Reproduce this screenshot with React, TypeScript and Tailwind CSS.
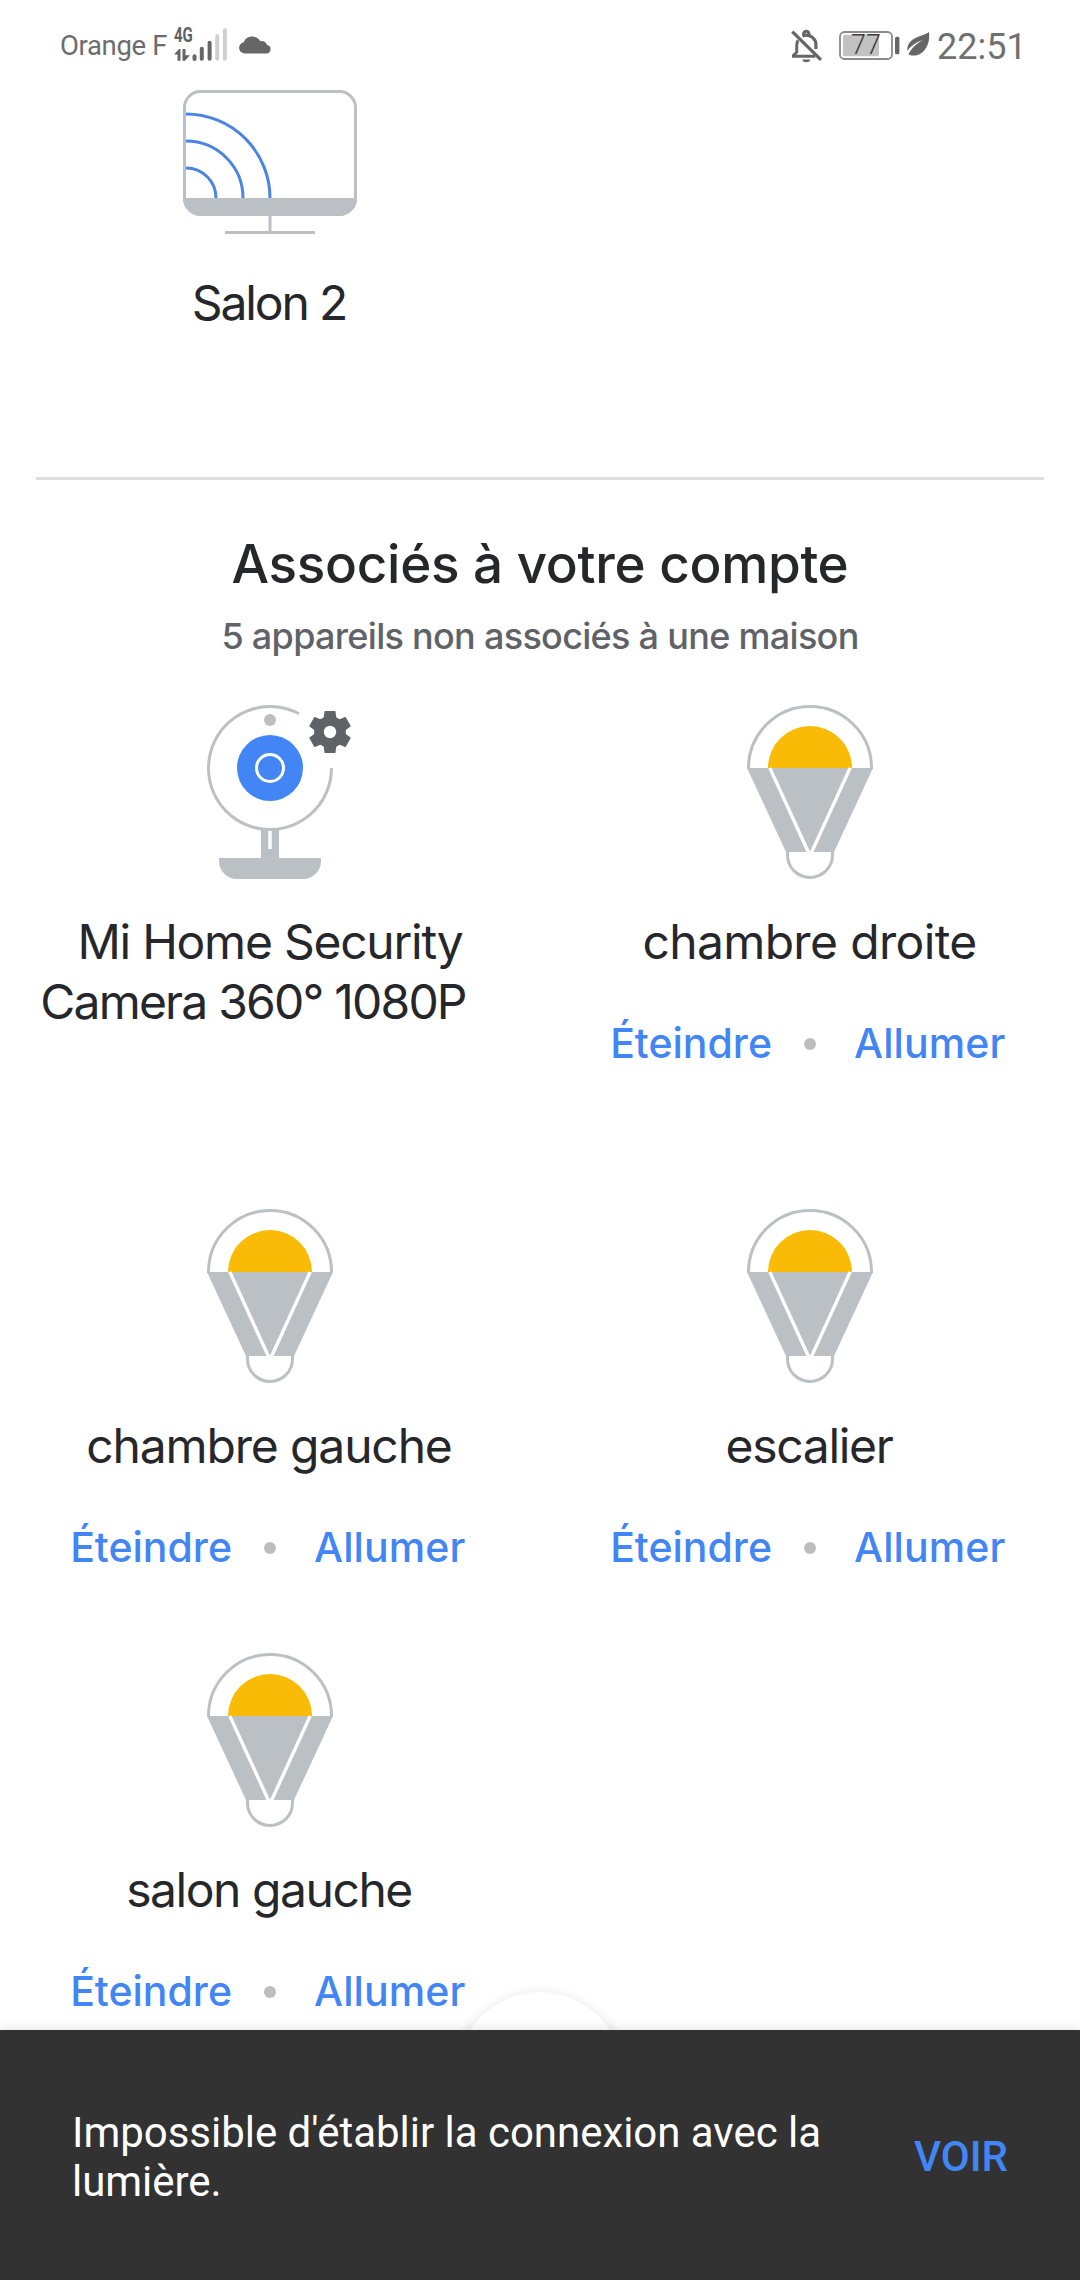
import React from 'react';

const GREY = '#bbc0c4';

function StatusBar() {
  return (
    <header className="flex h-[90px] shrink-0 items-start justify-between pl-[60px] pr-[58px] font-['Roboto','Liberation_Sans',sans-serif] text-[#6a6a6a]">
      <div className="flex items-start">
        <span className="mt-[29px] w-[109px] whitespace-nowrap text-[27.5px] leading-[33px] font-normal tracking-[-0.35px] text-[#6c6c6c]">Orange F</span>
        <div className="relative ml-[3px] mt-[26px] h-[36px] w-[58px]">
          <span className="absolute left-[2px] top-0 origin-left scale-x-75 text-[20px] leading-[19px] font-bold text-[#616161]">4G</span>
          <svg className="absolute inset-0" width="58" height="36" viewBox="0 0 58 36">
            <g stroke="#666" strokeWidth="4" strokeLinecap="round">
              <path d="M22.5 30.3v2.6M29.8 22.8v10M37.6 16.8v16" />
              <path d="M45.2 10v22.8M52.9 4.3v28.5" stroke="#d0d0d0" />
            </g>
            <path d="M2 28.5 7 23h1.5v11.7H5.5v-6.2ZM10.5 23h3v6.2H18L13 34.7h-2.5Z" fill="#666" />
          </svg>
        </div>
        <svg className="ml-[9px] mt-[35px]" width="34" height="19" viewBox="0 0 34 19">
          <path d="M6 18.4A5.6 5.6 0 0 1 4.7 7.3 9.3 9.3 0 0 1 21.3 6.2 6 6 0 0 1 28 10.1a4.2 4.2 0 0 1 0 8.3Z" fill="#666" />
        </svg>
      </div>
      <div className="flex items-start">
        <svg className="mt-[28px]" width="34" height="36" viewBox="0 0 34 36" fill="none" stroke="#666">
          <path d="M8 12.2c-.9 1.7-1.3 3.5-1.3 5.6v6.4l-3.2 3.2v.9h21.8" strokeWidth="3" />
          <path d="M12.5 8.1a9.5 9.5 0 0 1 13.4 9.4v3.6" strokeWidth="3.2" />
          <path d="M13.6 7.2V5.9a2.7 2.7 0 0 1 5.4 0v1.3" strokeWidth="3" />
          <path d="M2.3 3.7 31 31.8" strokeWidth="3.2" />
          <path d="M12.5 31.6h7.6a3.8 2.6 0 0 1-7.6 0Z" fill="#666" stroke="none" />
        </svg>
        <div className="relative ml-[15px] mt-[31px] h-[29px] w-[61px]">
          <svg width="61" height="29" viewBox="0 0 61 29">
            <rect x="1" y="1" width="52" height="27" rx="4.5" fill="none" stroke="#8a8a8a" strokeWidth="1.8" />
            <rect x="4" y="3.7" width="36" height="21.5" rx="1.5" fill="#c2c2c2" />
            <rect x="56" y="5.7" width="4.4" height="17.5" rx="1.5" fill="#666" />
          </svg>
          <span className="absolute left-[12px] top-[-1px] text-[27px] leading-[31px] font-light text-[#3c3c3c]">77</span>
        </div>
        <svg className="ml-[6px] mt-[31px]" width="24" height="26" viewBox="0 0 24 26">
          <path d="M23 1C21 3 14 4.500 8.500 7.500 2.500 11 .8 15.500 1.500 20 5 14.500 10 11.500 16.500 9 10.500 13 5.500 17 2.500 23.200c2 1.800 8.500 2.200 13-1.200C21.500 17.500 24 10 23 1Z" fill="#666" />
        </svg>
        <span className="ml-[7px] mt-[26px] w-[85px] whitespace-nowrap text-[36px] leading-[42px] text-[#707070] font-normal">22:51</span>
      </div>
    </header>
  );
}

function CastIcon() {
  return (
    <svg width="174" height="144" viewBox="0 0 174 144" fill="none">
      <g stroke="#4c84e4" strokeWidth="3">
        <path d="M3 24a84 84 0 0 1 84 84M3 51a57 57 0 0 1 57 57M3 78a30 30 0 0 1 30 30" />
      </g>
      <rect x="1.500" y="1.500" width="171" height="123" rx="16" stroke={GREY} strokeWidth="3" />
      <path d="M0 108h174a18 18 0 0 1-18 18H18a18 18 0 0 1-18-18Z" fill={GREY} />
      <path d="M87 126v16M42 142.500h90" stroke={GREY} strokeWidth="3" />
    </svg>
  );
}

function CameraIcon() {
  return (
    <svg width="126" height="174" viewBox="0 0 126 174" fill="none" className="overflow-visible">
      <path d="M54 123h18v30h42v3a18 18 0 0 1-18 18H30a18 18 0 0 1-18-18v-3h42Z" fill={GREY} />
      <path d="M63 126v18" stroke="#fff" strokeWidth="3.500" />
      <path d="M124.500 63A61.500 61.500 0 1 1 92 8.800" stroke={GREY} strokeWidth="3" />
      <circle cx="63" cy="15" r="6" fill={GREY} />
      <circle cx="63" cy="63" r="33" fill="#4285f4" />
      <circle cx="63" cy="63" r="13.500" stroke="#fff" strokeWidth="3" />
      <g transform="translate(123 27)" fill="#5f6368">
        <circle r="15.800" />
        {[0, 60, 120, 180, 240, 300].map((a) => (
          <path key={a} transform={`rotate(${a})`} d="M-7.200-13.500-6.200-15-5.500-20.500Q-5.300-21-4.800-21H4.800Q5.300-21 5.500-20.500L6.200-15 7.200-13.500Z" />
        ))}
        <circle r="6.200" fill="#fff" />
      </g>
    </svg>
  );
}

function BulbIcon() {
  return (
    <svg width="126" height="174" viewBox="0 0 126 174" fill="none">
      <path d="M1.500 64V63a61.500 61.500 0 0 1 123 0v1" stroke={GREY} strokeWidth="3" />
      <path d="M21 63a42 42 0 0 1 84 0Z" fill="#f9bb06" />
      <path d="M0 63h126L87 147H39Z" fill={GREY} />
      <path d="M22.800 62.900 61.500 147.500M103.200 62.900 64.500 147.500" stroke="#fff" strokeWidth="3.400" />
      <path d="M40.500 146v4a22.500 22.500 0 0 0 45 0v-4" stroke={GREY} strokeWidth="3" />
    </svg>
  );
}

function Actions() {
  return (
    <div className="mt-[47px] grid h-12 w-full grid-cols-[1fr_12px_1fr] items-center text-[41px] leading-[48px] font-medium text-[#4285f4]">
      <button className="pr-[32px] text-right">Éteindre</button>
      <span className="mt-[2px] size-3 rounded-full bg-[#bdbdbd]" />
      <button className="pl-[38px] text-left tracking-[0.1px]">Allumer</button>
    </div>
  );
}

function Card({ icon, children, actions = true }: { icon: React.ReactNode; children: React.ReactNode; actions?: boolean }) {
  return (
    <article className="flex flex-col items-center">
      {icon}
      <div className="mt-[33px] text-center text-[48px] leading-[60px] whitespace-nowrap text-[#26272b]">{children}</div>
      {actions && <Actions />}
    </article>
  );
}

export default function App() {
  return (
    <div className="relative flex h-[2280px] w-[1080px] flex-col overflow-hidden bg-white font-['Inter','Liberation_Sans',sans-serif]">
      <StatusBar />
      <section className="grid grid-cols-2">
        <Card icon={<CastIcon />} actions={false}>
          <h3 className="mt-[6px] pr-[2px] tracking-[-2.1px]">Salon 2</h3>
        </Card>
      </section>
      <hr className="mx-9 mt-[144px] h-[3px] border-0 bg-[#dadce0]" />
      <h1 className="mt-[51px] text-center text-[53px] leading-[66px] font-medium tracking-[-0.3px] text-[#26272b]">Associés à votre compte</h1>
      <p className="mt-[17px] text-center text-[36px] leading-[44px] font-medium tracking-[-0.7px] text-[#5f6368]">5 appareils non associés à une maison</p>
      <section className="mt-[47px] grid grid-cols-2 grid-rows-[504px_444px_444px]">
        <Card icon={<CameraIcon />} actions={false}>
          <h3 className="tracking-[-1.25px]">Mi Home Security</h3>
          <h3 className="pr-[34px] tracking-[-1.8px]">Camera 360° 1080P</h3>
        </Card>
        <Card icon={<BulbIcon />}>
          <h3 className="pr-[1px] tracking-[-0.65px]">chambre droite</h3>
        </Card>
        <Card icon={<BulbIcon />}>
          <h3 className="pr-[2px] tracking-[-1.15px]">chambre gauche</h3>
        </Card>
        <Card icon={<BulbIcon />}>
          <h3 className="pr-[2px] tracking-[-1.3px]">escalier</h3>
        </Card>
        <Card icon={<BulbIcon />}>
          <h3 className="pr-[2px] tracking-[-1.45px]">salon gauche</h3>
        </Card>
      </section>
      <div className="absolute left-[456px] top-[1992px] size-[168px] rounded-full bg-white shadow-[0_2px_12px_rgba(0,0,0,0.14)]" />
      <aside className="absolute inset-x-0 bottom-0 flex h-[250px] items-center justify-between bg-[#323232] pl-[72px] pr-[72px] pt-[3px] font-['Roboto','Liberation_Sans',sans-serif] text-[42px] leading-[49px] text-white shadow-[0_0_12px_rgba(0,0,0,0.14)]">
        <p className="w-[760px] tracking-[-0.03px]">Impossible d'établir la connexion avec la lumière.</p>
        <button className="font-medium text-[#4285f4]">VOIR</button>
      </aside>
    </div>
  );
}
